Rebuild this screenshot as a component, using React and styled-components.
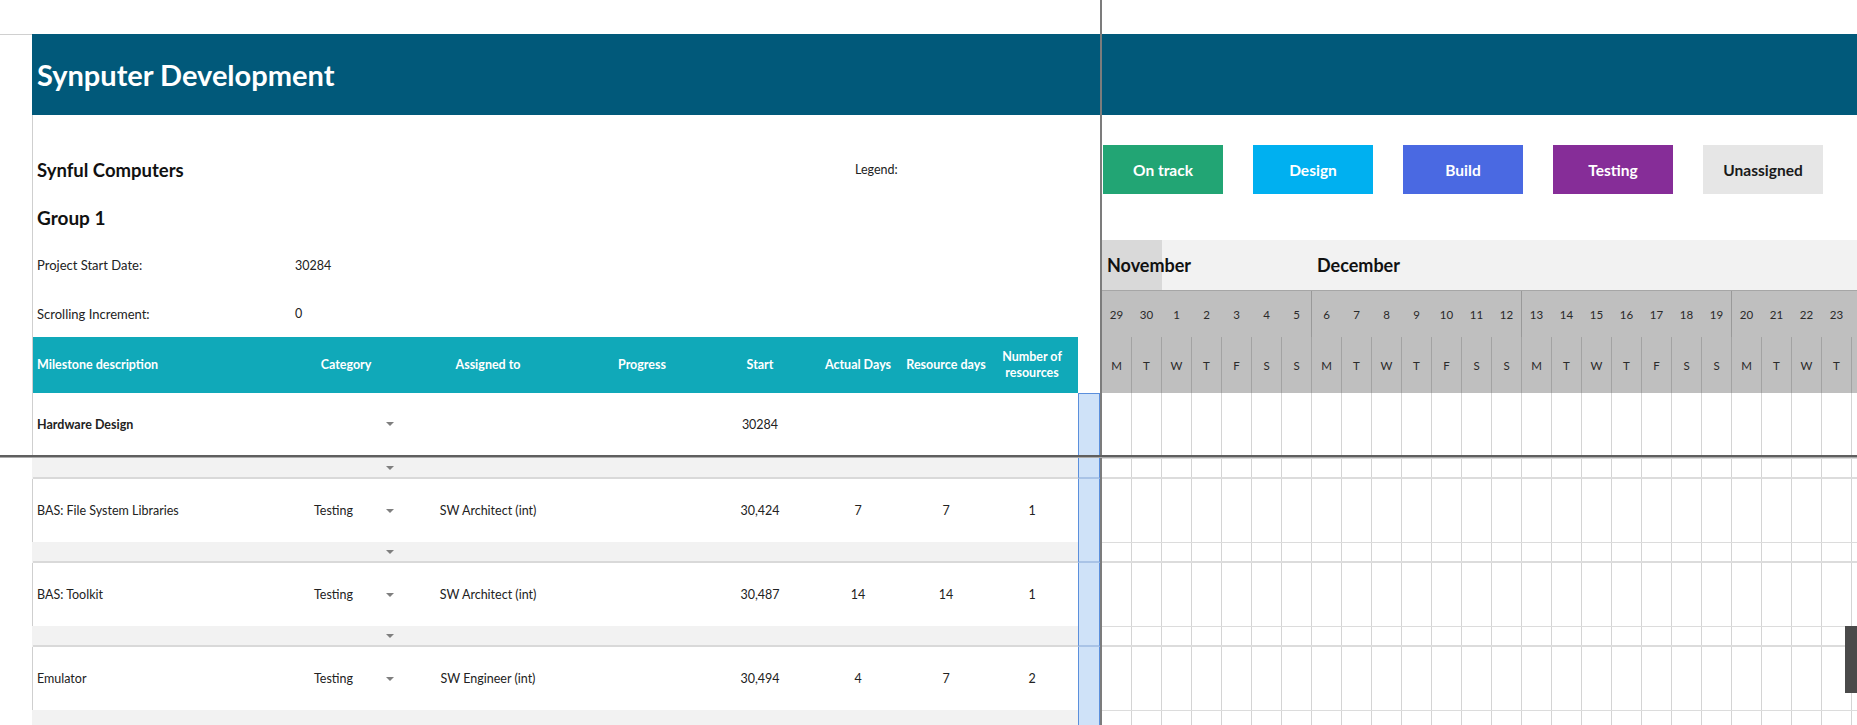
import React from 'react';
import styled, { createGlobalStyle } from 'styled-components';

const FONT = `Lato, "Noto Sans", "DejaVu Sans", sans-serif`;

const GlobalStyle = createGlobalStyle`
  html, body { margin: 0; padding: 0; background: #ffffff; }
  body { font-family: ${FONT}; color: #222222; }
  *, *::before, *::after { box-sizing: border-box; }
`;

const COLS = '257px 112px 172px 136px 100px 96px 80px 92px';

const DAYS = [
  [29, 'M'], [30, 'T'], [1, 'W'], [2, 'T'], [3, 'F'], [4, 'S'], [5, 'S'],
  [6, 'M'], [7, 'T'], [8, 'W'], [9, 'T'], [10, 'F'], [11, 'S'], [12, 'S'],
  [13, 'M'], [14, 'T'], [15, 'W'], [16, 'T'], [17, 'F'], [18, 'S'], [19, 'S'],
  [20, 'M'], [21, 'T'], [22, 'W'], [23, 'T'], [null, null],
];

const TASKS = [
  { name: 'BAS: File System Libraries', cat: 'Testing', who: 'SW Architect (int)', start: '30,424', actual: '7', res: '7', n: '1' },
  { name: 'BAS: Toolkit', cat: 'Testing', who: 'SW Architect (int)', start: '30,487', actual: '14', res: '14', n: '1' },
  { name: 'Emulator', cat: 'Testing', who: 'SW Engineer (int)', start: '30,494', actual: '4', res: '7', n: '2' },
];

const LEGEND = [
  { label: 'On track', bg: '#22a574', fg: '#ffffff' },
  { label: 'Design', bg: '#00b0f0', fg: '#ffffff' },
  { label: 'Build', bg: '#4a69e2', fg: '#ffffff' },
  { label: 'Testing', bg: '#862d98', fg: '#ffffff' },
  { label: 'Unassigned', bg: '#e6e6e6', fg: '#1a1a1a' },
];

/* ---------- page frame ---------- */

const Page = styled.div`
  position: relative;
  width: 1857px;
  height: 725px;
  overflow: hidden;
  display: flex;
  flex-direction: column;
  background: #ffffff;
`;

const Pane = styled.div`
  display: flex;
  flex: ${(p) => (p.$grow ? '1 1 auto' : `0 0 ${p.$h}px`)};
  overflow: hidden;
`;

const LeftSide = styled.div`
  flex: 0 0 1100px;
  display: flex;
  flex-direction: column;
`;

const VDivider = styled.div`
  flex: 0 0 2px;
  background: #7c7c7c;
`;

const RightSide = styled.div`
  flex: 1 1 auto;
  min-width: 0;
  display: flex;
  flex-direction: column;
  overflow: hidden;
`;

const FreezeLine = styled.div`
  flex: 0 0 3px;
  border-top: 2px solid #5f5f5f;
  background: #ababab;
`;

const Gap = styled.div`
  flex: 0 0 ${(p) => p.$h}px;
`;

const ScrollThumb = styled.div`
  position: absolute;
  right: 0;
  top: 626px;
  width: 12px;
  height: 67px;
  background: #4a4a4a;
`;

/* ---------- title ---------- */

const TitleRow = styled.div`
  flex: 0 0 81px;
  display: flex;
`;

const MarginCap = styled.div`
  flex: 0 0 32px;
  border-top: 1px solid #d0d0d0;
`;

const TitleBand = styled.div`
  flex: 1 1 auto;
  ${(p) => (p.$h ? `flex: 0 0 ${p.$h}px;` : '')}
  background: #01597a;
  display: flex;
  align-items: center;
  padding-left: 5px;
`;

const Title = styled.h1`
  margin: 0;
  color: #ffffff;
  font-family: ${FONT};
  font-weight: 700;
  font-size: 29px;
`;

/* ---------- info block ---------- */

const LeftBody = styled.div`
  margin-left: 32px;
  border-left: 1px solid #cfcfcf;
  display: flex;
  flex-direction: column;
  flex: 1 1 auto;
`;

const InfoRow = styled.div`
  flex: 0 0 ${(p) => p.$h}px;
  display: flex;
  align-items: center;
  padding-left: 4px;
`;

const CompanyName = styled.div`
  width: 818px;
  font-weight: 700;
  font-size: 18.5px;
  color: #111111;
`;

const LegendLabel = styled.div`
  font-size: 12.5px;
  color: #222222;
`;

const GroupName = styled.div`
  font-weight: 700;
  font-size: 19px;
  color: #111111;
`;

const FieldLabel = styled.div`
  width: 258px;
  font-size: 13px;
  color: #222222;
`;

const FieldValue = styled.div`
  font-size: 12.5px;
  color: #222222;
`;

/* ---------- table ---------- */

const TableRow = styled.div`
  flex: 0 0 ${(p) => p.$h}px;
  height: ${(p) => p.$h}px;
  display: flex;
`;

const Cells = styled.div`
  flex: 0 0 1045px;
  display: grid;
  grid-template-columns: ${COLS};
  align-items: center;
  background: ${(p) => p.$bg || '#ffffff'};
  border-bottom: ${(p) => (p.$line ? '2px solid #d9d9d9' : 'none')};
`;

const HeadCell = styled.div`
  color: #ffffff;
  font-weight: 700;
  font-size: 12.5px;
  line-height: 16px;
  text-align: ${(p) => (p.$left ? 'left' : 'center')};
  padding-left: ${(p) => (p.$left ? '4px' : '0')};
  white-space: nowrap;
`;

const Cell = styled.div`
  font-size: 12.5px;
  color: #222222;
  font-weight: ${(p) => (p.$bold ? 700 : 400)};
  text-align: ${(p) => (p.$left ? 'left' : 'center')};
  padding-left: ${(p) => (p.$left ? '4px' : '0')};
  white-space: nowrap;
`;

const CategoryCell = styled.div`
  display: flex;
  align-items: center;
  justify-content: space-between;
  padding: 0 8px 0 24px;
  font-size: 12.5px;
  color: #222222;
`;

const DropArrow = styled.span`
  width: 0;
  height: 0;
  border-left: 4px solid transparent;
  border-right: 4px solid transparent;
  border-top: 4px solid ${(p) => (p.$hidden ? 'transparent' : '#7f7f7f')};
`;

const SelCell = styled.div`
  flex: 0 0 22px;
  background: ${(p) => (p.$on ? '#cfe2f8' : '#ffffff')};
  border-left: 1px solid ${(p) => (p.$on ? '#5b8fdc' : '#ffffff')};
  border-right: 1px solid ${(p) => (p.$on ? '#5b8fdc' : '#ffffff')};
  border-top: ${(p) => (p.$top ? '1px solid #5b8fdc' : 'none')};
  border-bottom: ${(p) => (p.$line ? '2px solid #a9c3e6' : 'none')};
`;

const BottomLeft = styled.div`
  flex: 0 0 1100px;
  display: flex;
  flex-direction: column;
  padding-left: 32px;
`;

const DataRow = styled.div`
  flex: 0 0 ${(p) => p.$h}px;
  height: ${(p) => p.$h}px;
  display: flex;
  border-left: 1px solid ${(p) => (p.$stripe ? '#f2f2f2' : '#cfcfcf')};
`;

/* ---------- gantt ---------- */

const LegendRow = styled.div`
  flex: 0 0 49px;
  display: flex;
  gap: 30px;
  padding-left: 1px;
`;

const LegendBox = styled.div`
  flex: 0 0 120px;
  display: flex;
  align-items: center;
  justify-content: center;
  background: ${(p) => p.$bg};
  color: ${(p) => p.$fg};
  font-weight: 700;
  font-size: 15.5px;
`;

const MonthRow = styled.div`
  flex: 0 0 50px;
  display: flex;
  background: #f2f2f2;
`;

const MonthSeg = styled.div`
  flex: ${(p) => (p.$w ? `0 0 ${p.$w}px` : '1 1 auto')};
  min-width: 0;
  background: ${(p) => p.$bg};
  display: flex;
  align-items: center;
  padding-left: ${(p) => p.$pad}px;
`;

const MonthLabel = styled.span`
  position: relative;
  z-index: 1;
  white-space: nowrap;
  font-weight: 700;
  font-size: 18px;
  color: #111111;
`;

const StripRow = styled.div`
  flex: 0 0 ${(p) => p.$h}px;
  height: ${(p) => p.$h}px;
  display: flex;
  background: ${(p) => p.$bg || '#ffffff'};
  border-top: ${(p) => p.$top || 'none'};
  border-bottom: ${(p) => p.$bottom || 'none'};
`;

const DayCell = styled.div`
  flex: 0 0 30px;
  display: flex;
  align-items: center;
  justify-content: center;
  font-size: 11.5px;
  color: #2a2a2a;
  border-right: 1px solid ${(p) => p.$line || 'transparent'};
`;

function DayStrip({ h, bg, top, bottom, kind }) {
  return (
    <StripRow $h={h} $bg={bg} $top={top} $bottom={bottom}>
      {DAYS.map(([d, w], i) => {
        let line = '#d4d4d4';
        let text = null;
        if (kind === 'num') {
          line = i % 7 === 6 ? '#999999' : 'transparent';
          text = d;
        } else if (kind === 'dow') {
          line = '#a3a3a3';
          text = w;
        }
        return (
          <DayCell key={i} $line={line}>
            {text}
          </DayCell>
        );
      })}
    </StripRow>
  );
}

function StripeTableRow({ noArrow }) {
  return (
    <DataRow $h={21} $stripe>
      <Cells $bg="#f2f2f2" $line>
        <span />
        <CategoryCell>
          <span />
          <DropArrow $hidden={noArrow} />
        </CategoryCell>
      </Cells>
      <SelCell $on $line />
    </DataRow>
  );
}

function TaskRow({ t }) {
  return (
    <DataRow $h={63}>
      <Cells>
        <Cell $left>{t.name}</Cell>
        <CategoryCell>
          <span>{t.cat}</span>
          <DropArrow />
        </CategoryCell>
        <Cell>{t.who}</Cell>
        <Cell />
        <Cell>{t.start}</Cell>
        <Cell>{t.actual}</Cell>
        <Cell>{t.res}</Cell>
        <Cell>{t.n}</Cell>
      </Cells>
      <SelCell $on />
    </DataRow>
  );
}

export default function App() {
  const bottomRows = [];
  TASKS.forEach((t, i) => {
    bottomRows.push(<StripeTableRow key={`s${i}`} />);
    bottomRows.push(<TaskRow key={`t${i}`} t={t} />);
  });
  bottomRows.push(<StripeTableRow key="s-last" noArrow />);

  const ganttBottom = [];
  TASKS.forEach((t, i) => {
    ganttBottom.push(
      <DayStrip key={`gs${i}`} h={21} top="1px solid #dcdcdc" bottom="2px solid #dcdcdc" />
    );
    ganttBottom.push(<DayStrip key={`gt${i}`} h={63} />);
  });
  ganttBottom.push(<DayStrip key="gs-last" h={21} top="1px solid #dcdcdc" bottom="2px solid #dcdcdc" />);

  return (
    <>
      <GlobalStyle />
      <Page>
        <Pane $h={455}>
          <LeftSide>
            <Gap $h={34} />
            <TitleRow>
              <MarginCap />
              <TitleBand>
                <Title>Synputer Development</Title>
              </TitleBand>
            </TitleRow>
            <LeftBody>
              <InfoRow $h={30} />
              <InfoRow $h={49}>
                <CompanyName>Synful Computers</CompanyName>
                <LegendLabel>Legend:</LegendLabel>
              </InfoRow>
              <InfoRow $h={46}>
                <GroupName>Group 1</GroupName>
              </InfoRow>
              <InfoRow $h={50}>
                <FieldLabel>Project Start Date:</FieldLabel>
                <FieldValue>30284</FieldValue>
              </InfoRow>
              <InfoRow $h={47}>
                <FieldLabel>Scrolling Increment:</FieldLabel>
                <FieldValue>0</FieldValue>
              </InfoRow>
              <TableRow $h={56}>
                <Cells $bg="#10a9b9">
                  <HeadCell $left>Milestone description</HeadCell>
                  <HeadCell>Category</HeadCell>
                  <HeadCell>Assigned to</HeadCell>
                  <HeadCell>Progress</HeadCell>
                  <HeadCell>Start</HeadCell>
                  <HeadCell>Actual Days</HeadCell>
                  <HeadCell>Resource days</HeadCell>
                  <HeadCell>
                    Number of
                    <br />
                    resources
                  </HeadCell>
                </Cells>
                <SelCell />
              </TableRow>
              <TableRow $h={62}>
                <Cells>
                  <Cell $left $bold>Hardware Design</Cell>
                  <CategoryCell>
                    <span />
                    <DropArrow />
                  </CategoryCell>
                  <Cell />
                  <Cell />
                  <Cell>30284</Cell>
                  <Cell />
                  <Cell />
                  <Cell />
                </Cells>
                <SelCell $on $top />
              </TableRow>
            </LeftBody>
          </LeftSide>
          <VDivider />
          <RightSide>
            <Gap $h={34} />
            <TitleBand $h={81} />
            <Gap $h={30} />
            <LegendRow>
              {LEGEND.map((l) => (
                <LegendBox key={l.label} $bg={l.bg} $fg={l.fg}>
                  {l.label}
                </LegendBox>
              ))}
            </LegendRow>
            <Gap $h={46} />
            <MonthRow>
              <MonthSeg $w={60} $bg="#d9d9d9" $pad={5}>
                <MonthLabel>November</MonthLabel>
              </MonthSeg>
              <MonthSeg $bg="#f2f2f2" $pad={155}>
                <MonthLabel>December</MonthLabel>
              </MonthSeg>
            </MonthRow>
            <DayStrip h={47} bg="#bfbfbf" top="1px solid #a6a6a6" kind="num" />
            <DayStrip h={56} bg="#bfbfbf" kind="dow" />
            <DayStrip h={62} />
          </RightSide>
        </Pane>
        <FreezeLine />
        <Pane $grow>
          <BottomLeft>{bottomRows}</BottomLeft>
          <VDivider />
          <RightSide>{ganttBottom}</RightSide>
        </Pane>
        <ScrollThumb />
      </Page>
    </>
  );
}
